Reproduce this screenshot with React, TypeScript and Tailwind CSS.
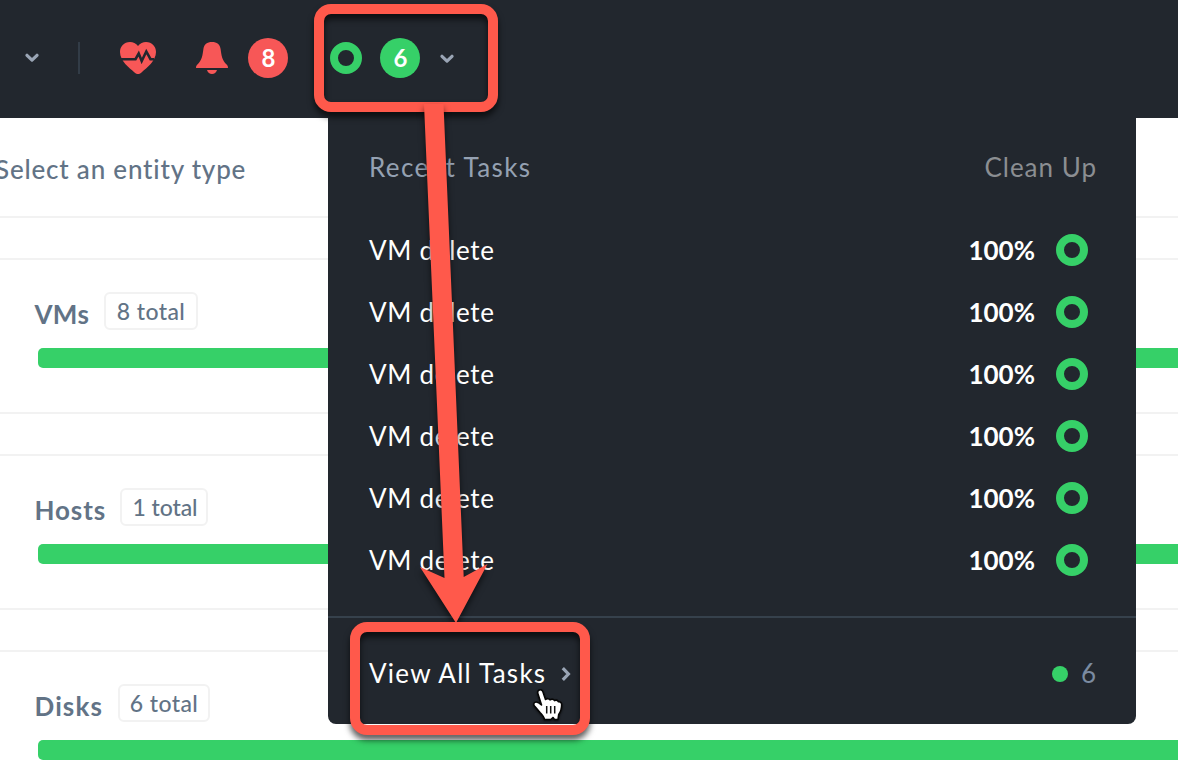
import React from "react";

const entities = [
  { name: "VMs", total: "8 total", nameClass: "w-[69.500px] tracking-[0.3px]", badgeClass: "w-[94px] tracking-[0.4px]" },
  { name: "Hosts", total: "1 total", nameClass: "w-[85.500px] tracking-[0.9px]", badgeClass: "w-[88px] tracking-[-0.1px] pl-[2px]" },
  { name: "Disks", total: "6 total", nameClass: "w-[83.500px] tracking-[1.1px]", badgeClass: "w-[92px] tracking-[0.4px]" },
];

const tasks = [1, 2, 3, 4, 5, 6];

function Ring() {
  return <span className="block size-8 shrink-0 rounded-full border-8 border-[#36d068]" />;
}

function ChevronDown({ className }: { className: string }) {
  return (
    <svg viewBox="0 0 14 10" className={className} fill="none" stroke="#9aa5b5" strokeWidth="3.2" strokeLinecap="round" strokeLinejoin="round">
      <path d="M2 2.300 7 7.100l5-4.800" />
    </svg>
  );
}

function HeartPulse() {
  return (
    <svg width="36" height="32" viewBox="0 0 36 32" className="shrink-0">
      <path
        fill="#f75757"
        d="M18 4C16 1.300 13 0 10 0 4 0 0 4.500 0 10c0 9 9.500 16 14 20 1.500 1.400 2.500 2 4 2s2.500-.6 4-2c4.500-4 14-11 14-20C36 4.500 32 0 26 0c-3 0-6 1.300-8 4Z"
      />
      <path
        d="M1 17.200h14.500l3.200-5.700 3 7.500 4.600-9.500 4.200 7.700H34"
        fill="none"
        stroke="#22272e"
        strokeWidth="2.600"
      />
    </svg>
  );
}

function Bell() {
  return (
    <svg width="32" height="32" viewBox="0 0 32 32" className="shrink-0" fill="#f75757">
      <path d="M16 0c5 0 8 2.500 8.600 7 .8 6.500 1.600 11.500 6 15.500 1 .9 1.400 1.700 1.400 3.500H0c0-1.800.4-2.600 1.400-3.500 4.400-4 5.200-9 6-15.500C8 2.500 11 0 16 0Z" />
      <path d="M11 28h10c-.8 2.600-2.600 4-5 4s-4.200-1.400-5-4Z" />
    </svg>
  );
}

function Header() {
  return (
    <header className="flex h-[118px] items-start bg-[#22272e] pt-[38px]">
      <div className="flex h-10 items-center">
        <ChevronDown className="ml-[25px] h-[10px] w-[14px]" />
        <span className="ml-[39px] h-8 w-[2px] bg-[#323c47]" />
        <span className="ml-10"><HeartPulse /></span>
        <span className="ml-10"><Bell /></span>
        <span className="ml-5 flex size-10 items-center justify-center rounded-full bg-[#f75757] pl-px text-[24px] font-bold text-white">
          8
        </span>
        <span className="ml-[42px]"><Ring /></span>
        <span className="ml-[18px] flex size-10 items-center justify-center rounded-full bg-[#36d068] pl-px text-[24px] font-bold text-white">
          6
        </span>
        <ChevronDown className="mt-[2px] ml-5 h-[10px] w-[14px]" />
      </div>
    </header>
  );
}

function EntityList() {
  return (
    <main>
      <div className="flex h-[98px] items-center pt-[4px]">
        <span className="-ml-[5px] text-[26px] font-medium tracking-[0.8px] whitespace-nowrap text-[#627386]">
          Select an entity type
        </span>
      </div>
      {entities.map((e) => (
        <section key={e.name} className="h-[196px]">
          <div className="h-11 border-y-2 border-[#f2f2f2]" />
          <div className="flex h-[70px] items-start pt-8 pl-[34.500px]">
            <h2 className={`${e.nameClass} pt-[5px] text-[26px] leading-[34px] font-bold text-[#627386]`}>
              {e.name}
            </h2>
            <span
              className={`${e.badgeClass} flex h-[38px] items-center justify-center rounded-md border-2 border-[#f2f2f2] pt-px text-[23px] font-medium whitespace-nowrap text-[#627386]`}
            >
              {e.total}
            </span>
          </div>
          <div className="mt-[18px] ml-[38px] h-5 rounded-l-[5px] bg-[#36d068]" />
        </section>
      ))}
    </main>
  );
}

function TasksMenu() {
  return (
    <div className="absolute top-[118px] left-[328px] flex h-[606px] w-[808px] flex-col rounded-b-lg bg-[#22272e] text-[26px]">
      <div className="flex h-[101px] items-center justify-between pr-[39px] pb-[2px] pl-[41px]">
        <span className="tracking-[1.4px] text-[#95a1b2]">Recent Tasks</span>
        <span className="tracking-[1px] text-[#8b8e92]">Clean Up</span>
      </div>
      <ul className="flex-1">
        {tasks.map((t) => (
          <li key={t} className="flex h-[62px] items-center pr-12 pl-[41px] text-white">
            <span className="flex-1 tracking-[0.7px]">VM delete</span>
            <span className="mr-[21px] font-bold">100%</span>
            <Ring />
          </li>
        ))}
      </ul>
      <div className="flex h-[108px] items-center border-t-2 border-[#36414c] pt-1 pr-10 pl-[41px] text-white">
        <span className="tracking-[1.25px] whitespace-nowrap">View All Tasks</span>
        <svg width="10" height="14" viewBox="0 0 10 14" className="mt-[2px] ml-[15px]" fill="none" stroke="#9aa5b5" strokeWidth="3.2">
          <path d="M1.800 1.200 7.400 7l-5.600 5.800" />
        </svg>
        <span className="mt-[2px] ml-auto size-4 rounded-full bg-[#36d068]" />
        <span className="ml-[13px] text-[#7b8ba1]">6</span>
      </div>
    </div>
  );
}

function Annotations() {
  return (
    <>
      <div className="absolute top-1 left-[314px] h-[108px] w-[184px] rounded-[17px] border-10 border-[#ff594b] drop-shadow-[0_5px_3px_rgba(0,0,0,0.65)]" />
      <svg
        className="absolute top-[100px] left-[400px] drop-shadow-[0_4px_3px_rgba(0,0,0,0.6)]"
        width="110"
        height="530"
        viewBox="400 100 110 530"
      >
        <path d="M424 104h19.500L463.700 577l23.800-13L456 623l-36-56 24.500 11Z" fill="#ff594b" />
      </svg>
      <div className="absolute top-[622px] left-[350px] h-[113px] w-[240px] rounded-[17px] border-10 border-[#ff594b] drop-shadow-[0_5px_3px_rgba(0,0,0,0.65)]" />
      <svg
        className="absolute top-[688px] left-[532px] drop-shadow-[0_1px_1px_rgba(0,0,0,0.6)]"
        width="32"
        height="34"
        viewBox="0 0 32 34"
      >
        <path
          d="M6.500 2.500C8.500 1 10.500 2.200 11 4l2.500 7.500c1.500-1.300 3.600-1 4.500.3 1.500-1 3.600-.7 4.500.8 1.600-.8 3.200-.2 4 1.200 1.700-.4 3.200.8 3.200 2.800 0 5-.7 7-3 10l-.7 4.900h-3.500l-1.500-2-2.200 2H12.500c-.5-3-2-4.500-4.500-7L2.500 18c-1.600-2-.3-4 1.700-4 2 0 3.300 1 5.300 3L6 6c-.5-1.500-.3-2.800.5-3.500Z"
          fill="#fff"
          stroke="#050505"
          strokeWidth="1.600"
          strokeLinejoin="round"
        />
        <path d="M14.700 18v7.500M18.700 18v7.500M22.700 18v7.500" stroke="#111" strokeWidth="1.500" fill="none" />
      </svg>
    </>
  );
}

export default function App() {
  return (
    <div className="relative h-[766px] w-[1178px] overflow-hidden bg-white font-['Lato',sans-serif]">
      <Header />
      <EntityList />
      <TasksMenu />
      <Annotations />
    </div>
  );
}
